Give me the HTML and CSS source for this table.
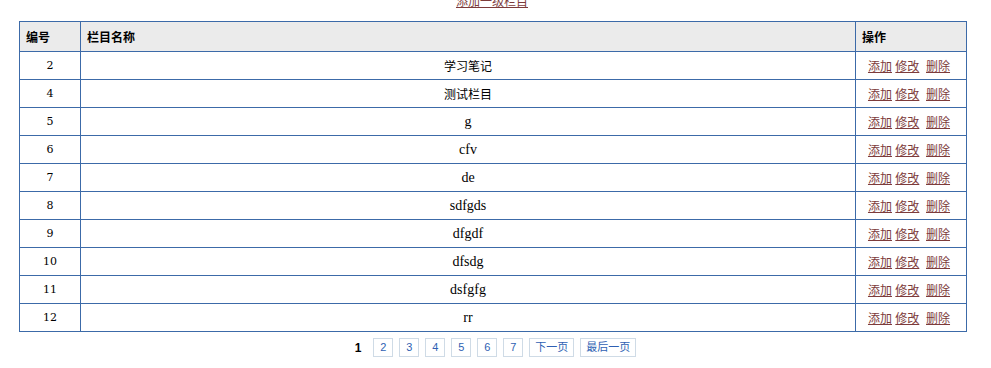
FILE: index.html
```html
<!DOCTYPE html>
<html>
<head>
<meta charset="utf-8">
<link rel="stylesheet" href="styles.css">
</head>
<body>
<div class="top"><a href="#">添加一级栏目</a></div>
<table class="grid">
  <thead>
    <tr><th class="c-id">编号</th><th class="c-name">栏目名称</th><th class="c-op">操作</th></tr>
  </thead>
  <tbody>
    <tr><td class="num">2</td><td class="name cjk">学习笔记</td><td class="ops"><a href="#">添加</a> <a href="#">修改</a>&nbsp; <a href="#">删除</a></td></tr>
    <tr><td class="num">4</td><td class="name cjk">测试栏目</td><td class="ops"><a href="#">添加</a> <a href="#">修改</a>&nbsp; <a href="#">删除</a></td></tr>
    <tr><td class="num">5</td><td class="name">g</td><td class="ops"><a href="#">添加</a> <a href="#">修改</a>&nbsp; <a href="#">删除</a></td></tr>
    <tr><td class="num">6</td><td class="name">cfv</td><td class="ops"><a href="#">添加</a> <a href="#">修改</a>&nbsp; <a href="#">删除</a></td></tr>
    <tr><td class="num">7</td><td class="name">de</td><td class="ops"><a href="#">添加</a> <a href="#">修改</a>&nbsp; <a href="#">删除</a></td></tr>
    <tr><td class="num">8</td><td class="name">sdfgds</td><td class="ops"><a href="#">添加</a> <a href="#">修改</a>&nbsp; <a href="#">删除</a></td></tr>
    <tr><td class="num">9</td><td class="name">dfgdf</td><td class="ops"><a href="#">添加</a> <a href="#">修改</a>&nbsp; <a href="#">删除</a></td></tr>
    <tr><td class="num">10</td><td class="name">dfsdg</td><td class="ops"><a href="#">添加</a> <a href="#">修改</a>&nbsp; <a href="#">删除</a></td></tr>
    <tr><td class="num">11</td><td class="name">dsfgfg</td><td class="ops"><a href="#">添加</a> <a href="#">修改</a>&nbsp; <a href="#">删除</a></td></tr>
    <tr><td class="num">12</td><td class="name">rr</td><td class="ops"><a href="#">添加</a> <a href="#">修改</a>&nbsp; <a href="#">删除</a></td></tr>
  </tbody>
</table>
<div class="pager">
  <span class="cur">1</span>
  <a href="#" class="pg">2</a>
  <a href="#" class="pg">3</a>
  <a href="#" class="pg">4</a>
  <a href="#" class="pg">5</a>
  <a href="#" class="pg">6</a>
  <a href="#" class="pg">7</a>
  <a href="#" class="pg wide">下一页</a>
  <a href="#" class="pg wide">最后一页</a>
</div>
</body>
</html>
```
FILE: styles.css
```css
html, body {
  margin: 0;
  padding: 0;
  background: #fff;
}
body {
  font-family: "Liberation Sans", "Noto Sans CJK SC", sans-serif;
  font-size: 12px;
  color: #000;
}
a {
  color: #7d3b3b;
  text-decoration: underline;
}
.top {
  text-align: center;
  height: 25px;
  line-height: 12px;
  margin-top: -4px;
  padding-right: 7px;
}
.grid {
  border-collapse: collapse;
  margin-left: 19px;
  width: 948px;
  table-layout: fixed;
}
.grid th, .grid td {
  border: 1px solid #3c6aa8;
  padding: 0;
}
.grid th {
  background: #ebebeb;
  height: 29px;
  text-align: left;
  font-weight: bold;
  padding-left: 6px;
  font-size: 12px;
}
.c-id { width: 54px; }
.c-op { width: 104px; }
.grid td {
  height: 27px;
  text-align: center;
}
.num {
  font-family: "DejaVu Serif", "Liberation Serif", serif;
  font-size: 11px;
}
.name {
  font-family: "Liberation Serif", "Noto Sans CJK SC", serif;
  font-size: 14px;
}
.name.cjk {
  font-family: "Noto Sans CJK SC", sans-serif;
  font-size: 12px;
}
.ops {
  font-size: 12px;
  padding-right: 4px !important;
}
.pager {
  display: flex;
  justify-content: center;
  align-items: center;
  gap: 6px;
  margin-top: 6px;
  padding-right: 0;
}
.cur {
  font-weight: bold;
  font-family: "Liberation Sans", sans-serif;
  font-size: 12px;
  margin-right: 6px;
}
.pg {
  display: inline-block;
  box-sizing: border-box;
  height: 19px;
  width: 20px;
  padding: 0;
  line-height: 17px;
  border: 1px solid #cfdbe6;
  color: #2f5fb3;
  text-decoration: none;
  font-size: 11px;
  text-align: center;
}
.pg.wide {
  width: auto;
  padding: 0 5px;
}
```
